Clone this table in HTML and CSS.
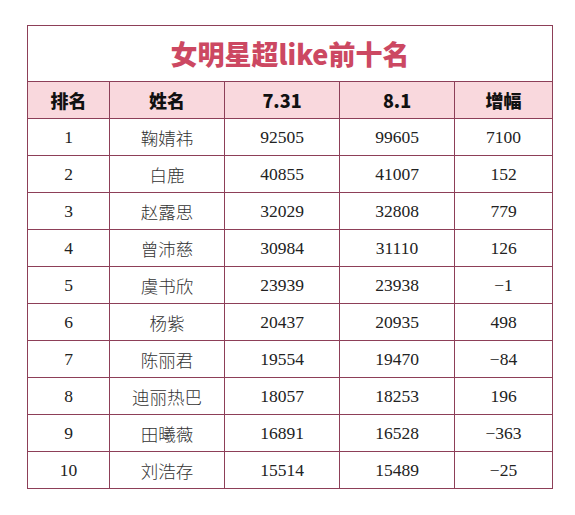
FILE: index.html
```html
<!DOCTYPE html>
<html lang="zh">
<head>
<meta charset="utf-8">
<link rel="stylesheet" href="styles.css">
</head>
<body>
<div class="page">
<table class="rank">
  <colgroup>
    <col class="c1"><col class="c2"><col class="c3"><col class="c4"><col class="c5">
  </colgroup>
  <tr class="title-row"><td colspan="5">女明星超like前十名</td></tr>
  <tr class="head"><th>排名</th><th>姓名</th><th>7.31</th><th>8.1</th><th>增幅</th></tr>
  <tr><td>1</td><td class="name">鞠婧祎</td><td>92505</td><td>99605</td><td>7100</td></tr>
  <tr><td>2</td><td class="name">白鹿</td><td>40855</td><td>41007</td><td>152</td></tr>
  <tr><td>3</td><td class="name">赵露思</td><td>32029</td><td>32808</td><td>779</td></tr>
  <tr><td>4</td><td class="name">曾沛慈</td><td>30984</td><td>31110</td><td>126</td></tr>
  <tr><td>5</td><td class="name">虞书欣</td><td>23939</td><td>23938</td><td>−1</td></tr>
  <tr><td>6</td><td class="name">杨紫</td><td>20437</td><td>20935</td><td>498</td></tr>
  <tr><td>7</td><td class="name">陈丽君</td><td>19554</td><td>19470</td><td>−84</td></tr>
  <tr><td>8</td><td class="name">迪丽热巴</td><td>18057</td><td>18253</td><td>196</td></tr>
  <tr><td>9</td><td class="name">田曦薇</td><td>16891</td><td>16528</td><td>−363</td></tr>
  <tr><td>10</td><td class="name">刘浩存</td><td>15514</td><td>15489</td><td>−25</td></tr>
</table>
</div>
</body>
</html>
```
FILE: styles.css
```css
html, body {
  margin: 0;
  padding: 0;
  background: #ffffff;
}
.page {
  padding: 25px 0 0 27px;
}
.rank {
  border-collapse: collapse;
  table-layout: fixed;
  width: 525px;
  font-family: "Liberation Serif", "Noto Sans CJK SC", serif;
  color: #222;
}
.c1 { width: 82px; }
.c2 { width: 115px; }
.c3 { width: 115px; }
.c4 { width: 115px; }
.c5 { width: 98px; }
.rank td, .rank th {
  border: 1.5px solid #8d3f58;
  text-align: center;
  padding: 0;
  height: 36px;
  font-size: 17.5px;
  font-weight: normal;
}
.rank .title-row td {
  height: 55px;
  font-family: "Noto Sans CJK SC", sans-serif;
  font-weight: 900;
  font-size: 27px;
  color: #cc4862;
}
.rank .head th {
  background: #f9d8dd;
  font-family: "Noto Sans CJK SC", sans-serif;
  font-weight: 900;
  font-size: 18px;
  color: #111;
}
.rank .name {
  font-family: "Noto Sans CJK SC", serif;
  font-weight: 300;
  color: #333;
}
```
